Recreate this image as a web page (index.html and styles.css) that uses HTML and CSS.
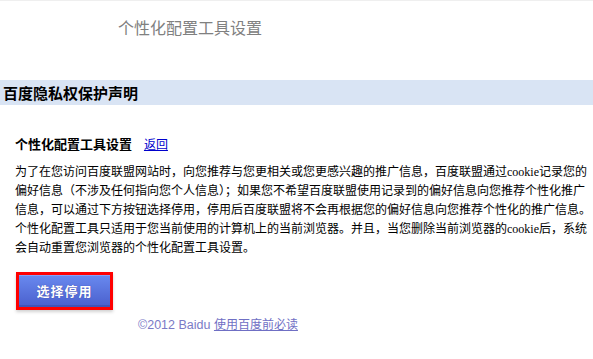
FILE: index.html
```html
<!DOCTYPE html>
<html>
	<head>
		<meta charset="UTF-8">
		<title>个性化配置工具设置</title>
		<link rel="stylesheet" href="styles.css">
	</head>
	<body>
		<div class="topline"></div>
		<div class="page_title">个性化配置工具设置</div>
		<div class="bar">
			<h1>百度隐私权保护声明</h1>
		</div>
		<div class="content">
			<div class="sub">
				<b>个性化配置工具设置</b>
				<a href="#">返回</a>
			</div>
			<p class="desc">为了在您访问百度联盟网站时，向您推荐与您更相关或您更感兴趣的推广信息，百度联盟通过cookie记录您的偏好信息（不涉及任何指向您个人信息）；如果您不希望百度联盟使用记录到的偏好信息向您推荐个性化推广信息，可以通过下方按钮选择停用，停用后百度联盟将不会再根据您的偏好信息向您推荐个性化的推广信息。个性化配置工具只适用于您当前使用的计算机上的当前浏览器。并且，当您删除当前浏览器的cookie后，系统会自动重置您浏览器的个性化配置工具设置。</p>
			<div class="btn_wrap">
				<input type="button" value="选择停用" class="btn" />
			</div>
		</div>
		<div class="footer">©2012 Baidu <a href="#">使用百度前必读</a></div>
	</body>
</html>
```

FILE: styles.css
```css
body{
	margin:0;
	font-family:"Noto Sans CJK SC",sans-serif;
	color:#000;
	background:#fff;
}
.topline{
	height:1px;
	background:#efefef;
}
.page_title{
	padding:16px 0 0 118px;
	height:20px;
	line-height:20px;
	font-size:16px;
	color:#808080;
}
.bar{
	margin-top:43px;
	height:25px;
	background:#d9e4f4;
}
.bar h1{
	margin:0;
	padding-left:3px;
	font-size:15px;
	line-height:25px;
	font-weight:bold;
}
.content{
	padding-left:15px;
}
.sub{
	margin-top:29px;
	line-height:20px;
	font-size:13px;
}
.sub a{
	margin-left:9px;
	font-size:12px;
	color:#0000cc;
}
.desc{
	margin:9px 0 0 0;
	font-family:"Liberation Serif","Noto Sans CJK SC",serif;
	font-size:12px;
	line-height:19px;
}
.btn_wrap{
	margin:14px 0 0 1px;
	width:91px;
	border:3px solid #ff0000;
	box-shadow:0 2px 3px rgba(0,0,0,0.18);
}
.btn{
	display:block;
	width:91px;
	height:32px;
	padding:0;
	border:none;
	border-top:1px solid #86a2f6;
	border-bottom:2px solid #4254b8;
	background:linear-gradient(#6888ee,#4c62cf);
	color:#fff;
	font-family:"Noto Sans CJK SC",sans-serif;
	font-size:13px;
	font-weight:bold;
	letter-spacing:1px;
	text-shadow:0 0 1px #3a3a9a;
	cursor:pointer;
}
.footer{
	margin-top:6px;
	padding-left:138px;
	line-height:18px;
	font-family:"Liberation Sans","Noto Sans CJK SC",sans-serif;
	font-size:12.5px;
	color:#7a7ac6;
}
.footer a{
	font-size:12px;
	color:#6f6fc4;
}
```
